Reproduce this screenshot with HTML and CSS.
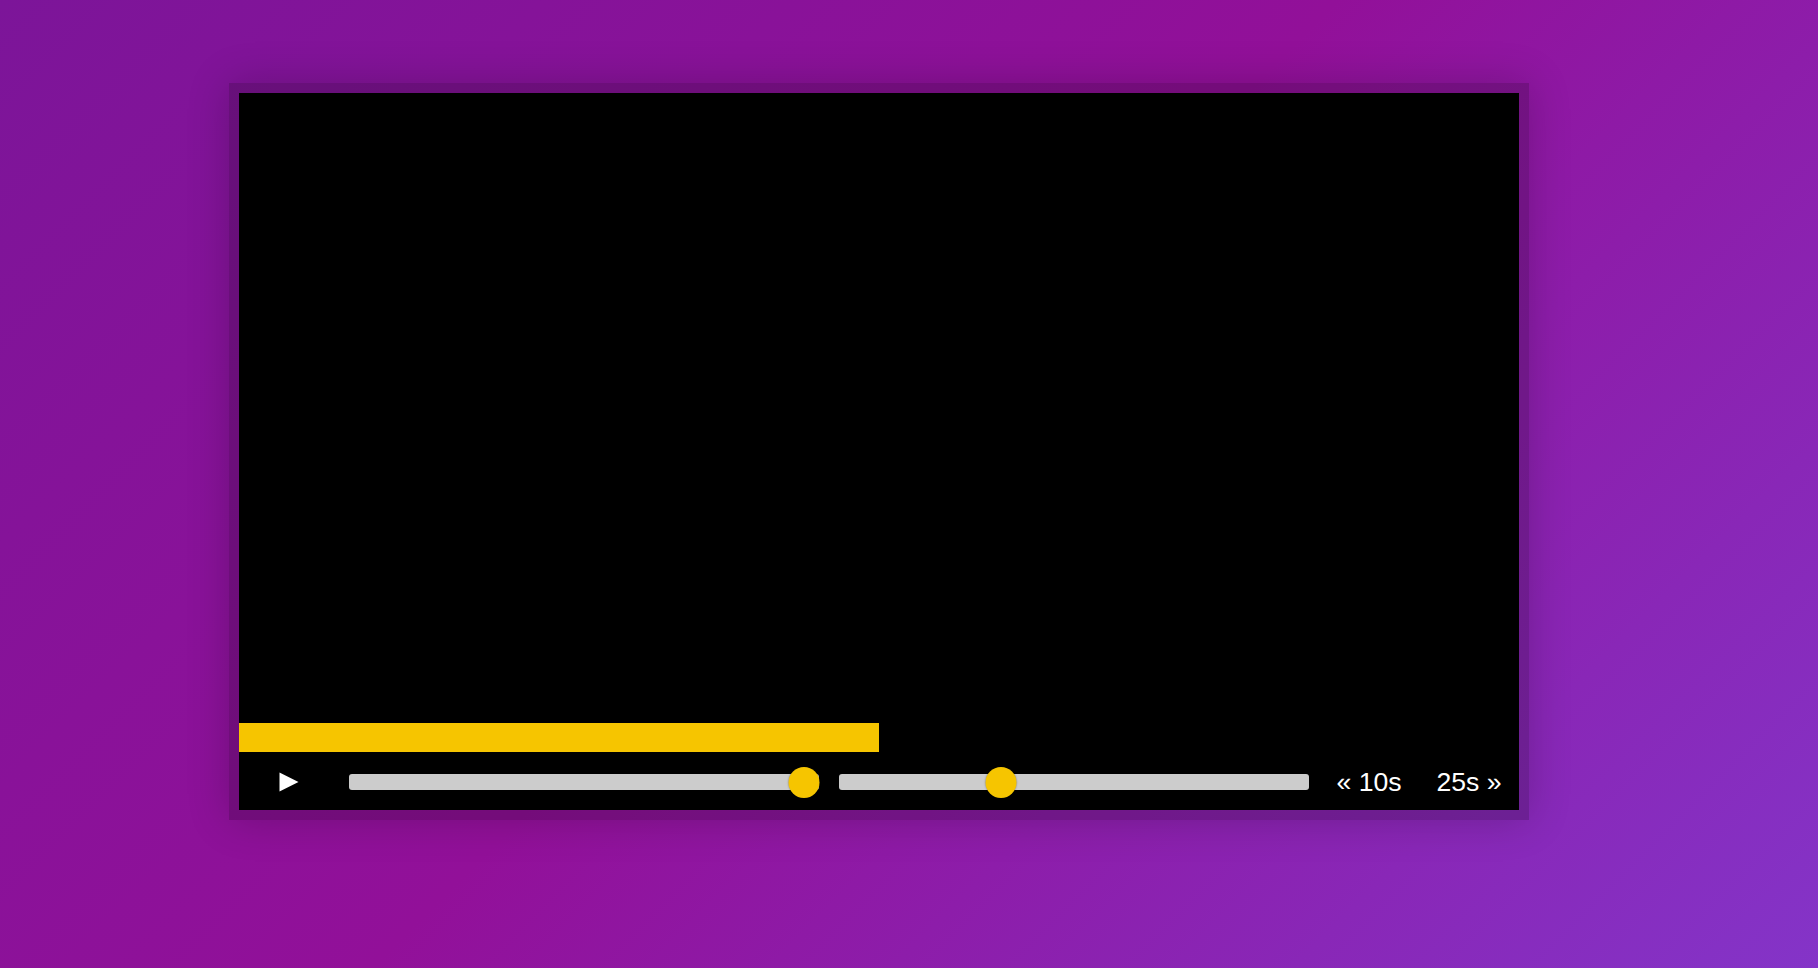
FILE: index.html
```html
<!DOCTYPE html>
<html lang="en">
<head>
<meta charset="utf-8">
<title>Video Player</title>
<link rel="stylesheet" href="styles.css">
</head>
<body>
  <div class="player">
    <div class="player__video"></div>
    <div class="progress">
      <div class="progress__filled"></div>
    </div>
    <div class="player__controls">
      <button class="player__button toggle" title="Toggle Play">
        <svg width="20" height="20" viewBox="0 0 20 20"><polygon points="0.5,0.5 19.5,10 0.5,19.5" fill="#fff"/></svg>
      </button>
      <div class="player__slider">
        <div class="slider__track"></div>
        <div class="slider__thumb" style="left: calc(15px + (100% - 30px) * 1);"></div>
      </div>
      <div class="player__slider">
        <div class="slider__track"></div>
        <div class="slider__thumb" style="left: calc(15px + (100% - 30px) * 0.3333);"></div>
      </div>
      <button class="player__button skip">« 10s</button>
      <button class="player__button skip">25s »</button>
    </div>
  </div>
</body>
</html>
```
FILE: styles.css
```css
html, body {
  margin: 0;
  padding: 0;
}
body {
  min-height: 968px;
  box-sizing: border-box;
  background: linear-gradient(135deg, #7c1599 0%, #921099 48%, #8434c8 100%);
  display: flex;
  align-items: flex-start;
  padding: 83px 0 0 229px;
  font-family: "Liberation Sans", Arial, sans-serif;
}
.player {
  width: 1280px;
  height: 717px;
  border: 10px solid rgba(0, 0, 0, 0.2);
  box-shadow: 0 0 40px rgba(0, 0, 0, 0.2);
  background-clip: padding-box;
  display: flex;
  flex-direction: column;
}
.player__video {
  flex: 1;
  background: #000;
}
.progress {
  height: 29px;
  background: #000;
  display: flex;
}
.progress__filled {
  width: 50%;
  background: #f6c500;
}
.player__controls {
  height: 58px;
  box-sizing: border-box;
  padding-top: 2px;
  background: #000;
  display: flex;
  align-items: center;
}
.player__button {
  background: none;
  border: 0;
  padding: 0;
  margin: 0;
  color: #fff;
  font-family: "Liberation Sans", Arial, sans-serif;
  font-size: 26.6px;
  line-height: 1;
  width: 100px;
  text-align: center;
  cursor: pointer;
  display: flex;
  align-items: center;
  justify-content: center;
}
.toggle {
  height: 30px;
}
.player__slider {
  width: 470px;
  margin: 0 10px;
  height: 56px;
  position: relative;
  display: flex;
  align-items: center;
}
.slider__track {
  width: 100%;
  height: 16px;
  border-radius: 3px;
  background: #ccc;
}
.slider__thumb {
  position: absolute;
  top: 50%;
  width: 31px;
  height: 31px;
  margin-top: -15px;
  border-radius: 50%;
  background: #f6c500;
  box-shadow: 0 0 2px rgba(0, 0, 0, 0.4);
  transform: translateX(-50%);
}
```
